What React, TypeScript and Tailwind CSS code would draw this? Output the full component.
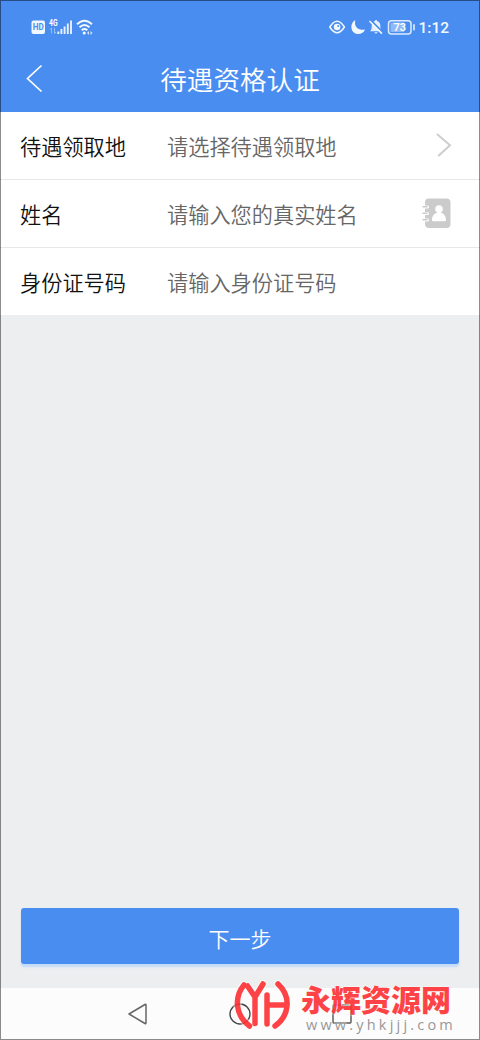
import type { ReactNode } from "react";

const StatusBar = () => {
  return (
    <div className="flex h-[54px] items-center justify-between pl-[31px] pr-[31px]">
      <svg width="62" height="18" viewBox="0 0 62 18" fill="none">
        <rect x="0.5" y="2.5" width="13.5" height="13.5" rx="2" fill="#f2f8ff" />
        <text x="7.2" y="12.4" textAnchor="middle" fontSize="8.5" fontWeight="700" textLength="11" lengthAdjust="spacingAndGlyphs" fontFamily="Roboto, sans-serif" fill="#4a8df0">HD</text>
        <text x="18" y="8" fontSize="8.5" fontWeight="700" textLength="8.5" lengthAdjust="spacingAndGlyphs" fontFamily="Roboto, sans-serif" fill="#fff">4G</text>
        <path d="M20.5 10v5.5M19 11.5l1.5-1.5M23.5 10v5.5l1.5-1.5" stroke="#a9cbfb" strokeWidth="0.8" />
        <path d="M27.3 13.5V16M30.4 11V16M33.6 8.5V16M36.8 5.5V16M40 2.5V16" stroke="#e6f1ff" strokeWidth="1.9" />
        <path d="M46 6.2Q53.5 -0.8 61 6.2M48.5 9.3Q53.5 4.8 58.5 9.3M50.7 12.2Q53.5 9.8 56.3 12.2" stroke="#f2f8ff" strokeWidth="2" />
        <circle cx="53.2" cy="15" r="1.5" fill="#fff" />
        <path d="M56 15l2-2v4zM61.5 15l-2-2v4z" fill="#d5e5fd" />
      </svg>
      <div className="flex items-center">
        <svg width="86" height="18" viewBox="0 0 86 18" fill="none">
          <path d="M0.8 9Q8 -2.6 15.4 9Q8 20.6 0.8 9Z" stroke="#f2f8ff" strokeWidth="1.5" />
          <circle cx="8.1" cy="9" r="3.3" fill="#f2f8ff" />
          <circle cx="9.2" cy="7.9" r="1" fill="#4a8df0" />
          <path d="M26.3 2.300C20.500 4.800 21 15.700 29 16C32.500 16 35 14.200 36 11.400C29.500 13.200 24.700 8.800 26.300 2.300Z" fill="#f2f8ff" />
          <path d="M41 13.3c1.5-1.3 1.7-2.3 1.7-5.3C42.7 5 44.2 3.400 46.200 3V2h1.600V3c2.300.5 3.500 2.300 3.500 4.800 0 3 .3 4.200 1.700 5.500zM45.400 14.200h3.300a1.700 1.700 0 0 1-3.300 0z" fill="#e6f1ff" />
          <path d="M41.500 2l12.600 12.700" stroke="#4a8df0" strokeWidth="1.800" />
          <path d="M40.500 3l12.400 12.600" stroke="#f2f8ff" strokeWidth="1.500" />
          <rect x="59.500" y="2.700" width="22.500" height="13.200" rx="3" stroke="#dcebff" strokeWidth="1.500" />
          <rect x="61.500" y="4.600" width="14" height="9.400" rx="1" fill="#8fb9f7" />
          <path d="M85 6.200v6" stroke="#dcebff" strokeWidth="1.700" />
          <text x="70.800" y="13.100" textAnchor="middle" fontSize="11" fontWeight="600" fontFamily="Roboto, sans-serif" fill="#fff">73</text>
        </svg>
        <span className="ml-[3px] pt-[2px] font-[Roboto] text-[15.5px] font-medium leading-[18px] text-[#f2f8ff]">1:12</span>
      </div>
    </div>
  );
};

const Header = () => {
  return (
    <header className="h-[112px] bg-[#4a8df0]">
      <StatusBar />
      <div className="grid h-[50px] grid-cols-[60px_1fr_60px] items-center">
        <svg className="ml-[26px]" width="18" height="30" viewBox="0 0 18 30" fill="none">
          <path d="M15.5 1.5L1.5 14.5L15.5 27.5" stroke="#fff" strokeWidth="1.7" />
        </svg>
        <h1 className="text-center text-[26.6px] font-[350] leading-[40px] text-white">待遇资格认证</h1>
      </div>
    </header>
  );
};

type FieldRowProps = {
  label: string;
  placeholder: string;
  icon?: ReactNode;
};

const FieldRow = ({ label, placeholder, icon }: FieldRowProps) => {
  return (
    <label className="flex h-[68px] items-center border-b border-[#e6e7e9] bg-white pl-[20px] pr-[28px] last-of-type:h-[67px] last-of-type:border-b-0">
      <span className="w-[147px] text-[21.2px] font-[350] leading-[31px] text-[#111]">{label}</span>
      <span className="flex-1 text-[21.2px] font-[350] leading-[31px] text-[#666]">{placeholder}</span>
      {icon}
    </label>
  );
};

const ArrowIcon = () => (
  <svg className="mb-[1px]" width="16" height="24" viewBox="0 0 16 24" fill="none">
    <path d="M1.5 1.5L14 12.3L2.8 22.5" stroke="#cdcdcd" strokeWidth="2" strokeLinecap="round" />
  </svg>
);

const ContactIcon = () => (
  <svg className="mr-[1px] mb-[2px]" width="30" height="30" viewBox="0 0 30 30" fill="none">
    <rect x="4" y="0.5" width="25.5" height="29.5" rx="4" fill="#cbcbcb" />
    <path d="M4 9h2.500M4 15.500h2.500M4 22h2.500" stroke="#fff" strokeWidth="3" strokeLinecap="round" />
    <path d="M2 8.700h4M2 15.200h4M2 21.700h4" stroke="#cbcbcb" strokeWidth="1.500" strokeLinecap="round" />
    <circle cx="18" cy="11" r="3.800" fill="#fff" />
    <path d="M16.400 13h3.200v1.500c3.400.8 5.300 4 5.400 7.500q0 1.300-1.300 1.300H12.200q-1.300 0-1.300-1.300c.1-3.500 2.100-6.700 5.500-7.500z" fill="#fff" />
  </svg>
);

const NavigationBar = () => {
  return (
    <nav className="flex h-[52px] items-center justify-between bg-[#fcfcfc] pl-[127px] pr-[127px]">
      <svg width="21" height="24" viewBox="0 0 21 24" fill="none">
        <path d="M2 12L18 2.5Q19 2 19 3.3V20.7Q19 22 18 21.5Z" stroke="#666" strokeWidth="1.5" strokeLinejoin="round" />
      </svg>
      <svg width="22" height="22" viewBox="0 0 22 22" fill="none">
        <circle cx="11" cy="11" r="10" stroke="#444" strokeWidth="1.4" />
      </svg>
      <svg width="22" height="22" viewBox="0 0 22 22" fill="none">
        <rect x="2" y="2" width="18" height="18" rx="1" stroke="#555" strokeWidth="1.4" />
      </svg>
    </nav>
  );
};

const Watermark = () => {
  return (
    <div className="pointer-events-none absolute bottom-[6px] left-[231px] flex opacity-90">
      <svg width="64" height="56" viewBox="231 978 64 56" fill="none" strokeLinecap="round" strokeLinejoin="round">
        <g stroke="#fff" strokeOpacity="0.5" strokeWidth="8.5">
          <path d="M244 985C234 997 235 1015 249.5 1026M247.5 986L255 997L263 984M255 997V1023.5M267 995V1024M267 1005H286M278 984C292 997 289 1016 275 1026" />
        </g>
        <g stroke="#ff3034" strokeWidth="5.5">
          <path d="M244 985C234 997 235 1015 249.5 1026M247.5 986L255 997L263 984M255 997V1023.5M267 995V1024M267 1005H286M278 984C292 997 289 1016 275 1026" />
        </g>
      </svg>
      <div className="ml-[6px] w-[160px] pt-[2px]">
        <div className="whitespace-nowrap text-[30px] font-black leading-[36px] text-[#ff3034] [text-shadow:0_0_2px_#fff,0_0_2px_#fff]">永辉资源网</div>
        <div className="ml-[5px] mt-[1px] whitespace-nowrap font-['Open_Sans'] text-[14.5px] leading-[15px] tracking-[3.2px] text-[#8d8d8d] [text-shadow:0_0_2px_#fff,0_0_2px_#fff]">www.yhkjjj.com</div>
      </div>
    </div>
  );
};

export default function App() {
  return (
    <div className="relative flex h-[1040px] w-[480px] flex-col overflow-hidden bg-[#edeef0] font-['Noto_Sans_CJK_SC',sans-serif]">
      <Header />
      <main className="flex flex-1 flex-col">
        <FieldRow label="待遇领取地" placeholder="请选择待遇领取地" icon={<ArrowIcon />} />
        <FieldRow label="姓名" placeholder="请输入您的真实姓名" icon={<ContactIcon />} />
        <FieldRow label="身份证号码" placeholder="请输入身份证号码" />
        <button className="mx-[21px] mb-[24px] mt-auto h-[56px] rounded-[3px] bg-[#4a8df0] pt-[5px] text-[21px] font-[350] text-white shadow-[0_3px_2px_#c5dbf8]">
          下一步
        </button>
      </main>
      <NavigationBar />
      <Watermark />
      <div className="pointer-events-none absolute inset-0 border border-black/45" />
    </div>
  );
}
